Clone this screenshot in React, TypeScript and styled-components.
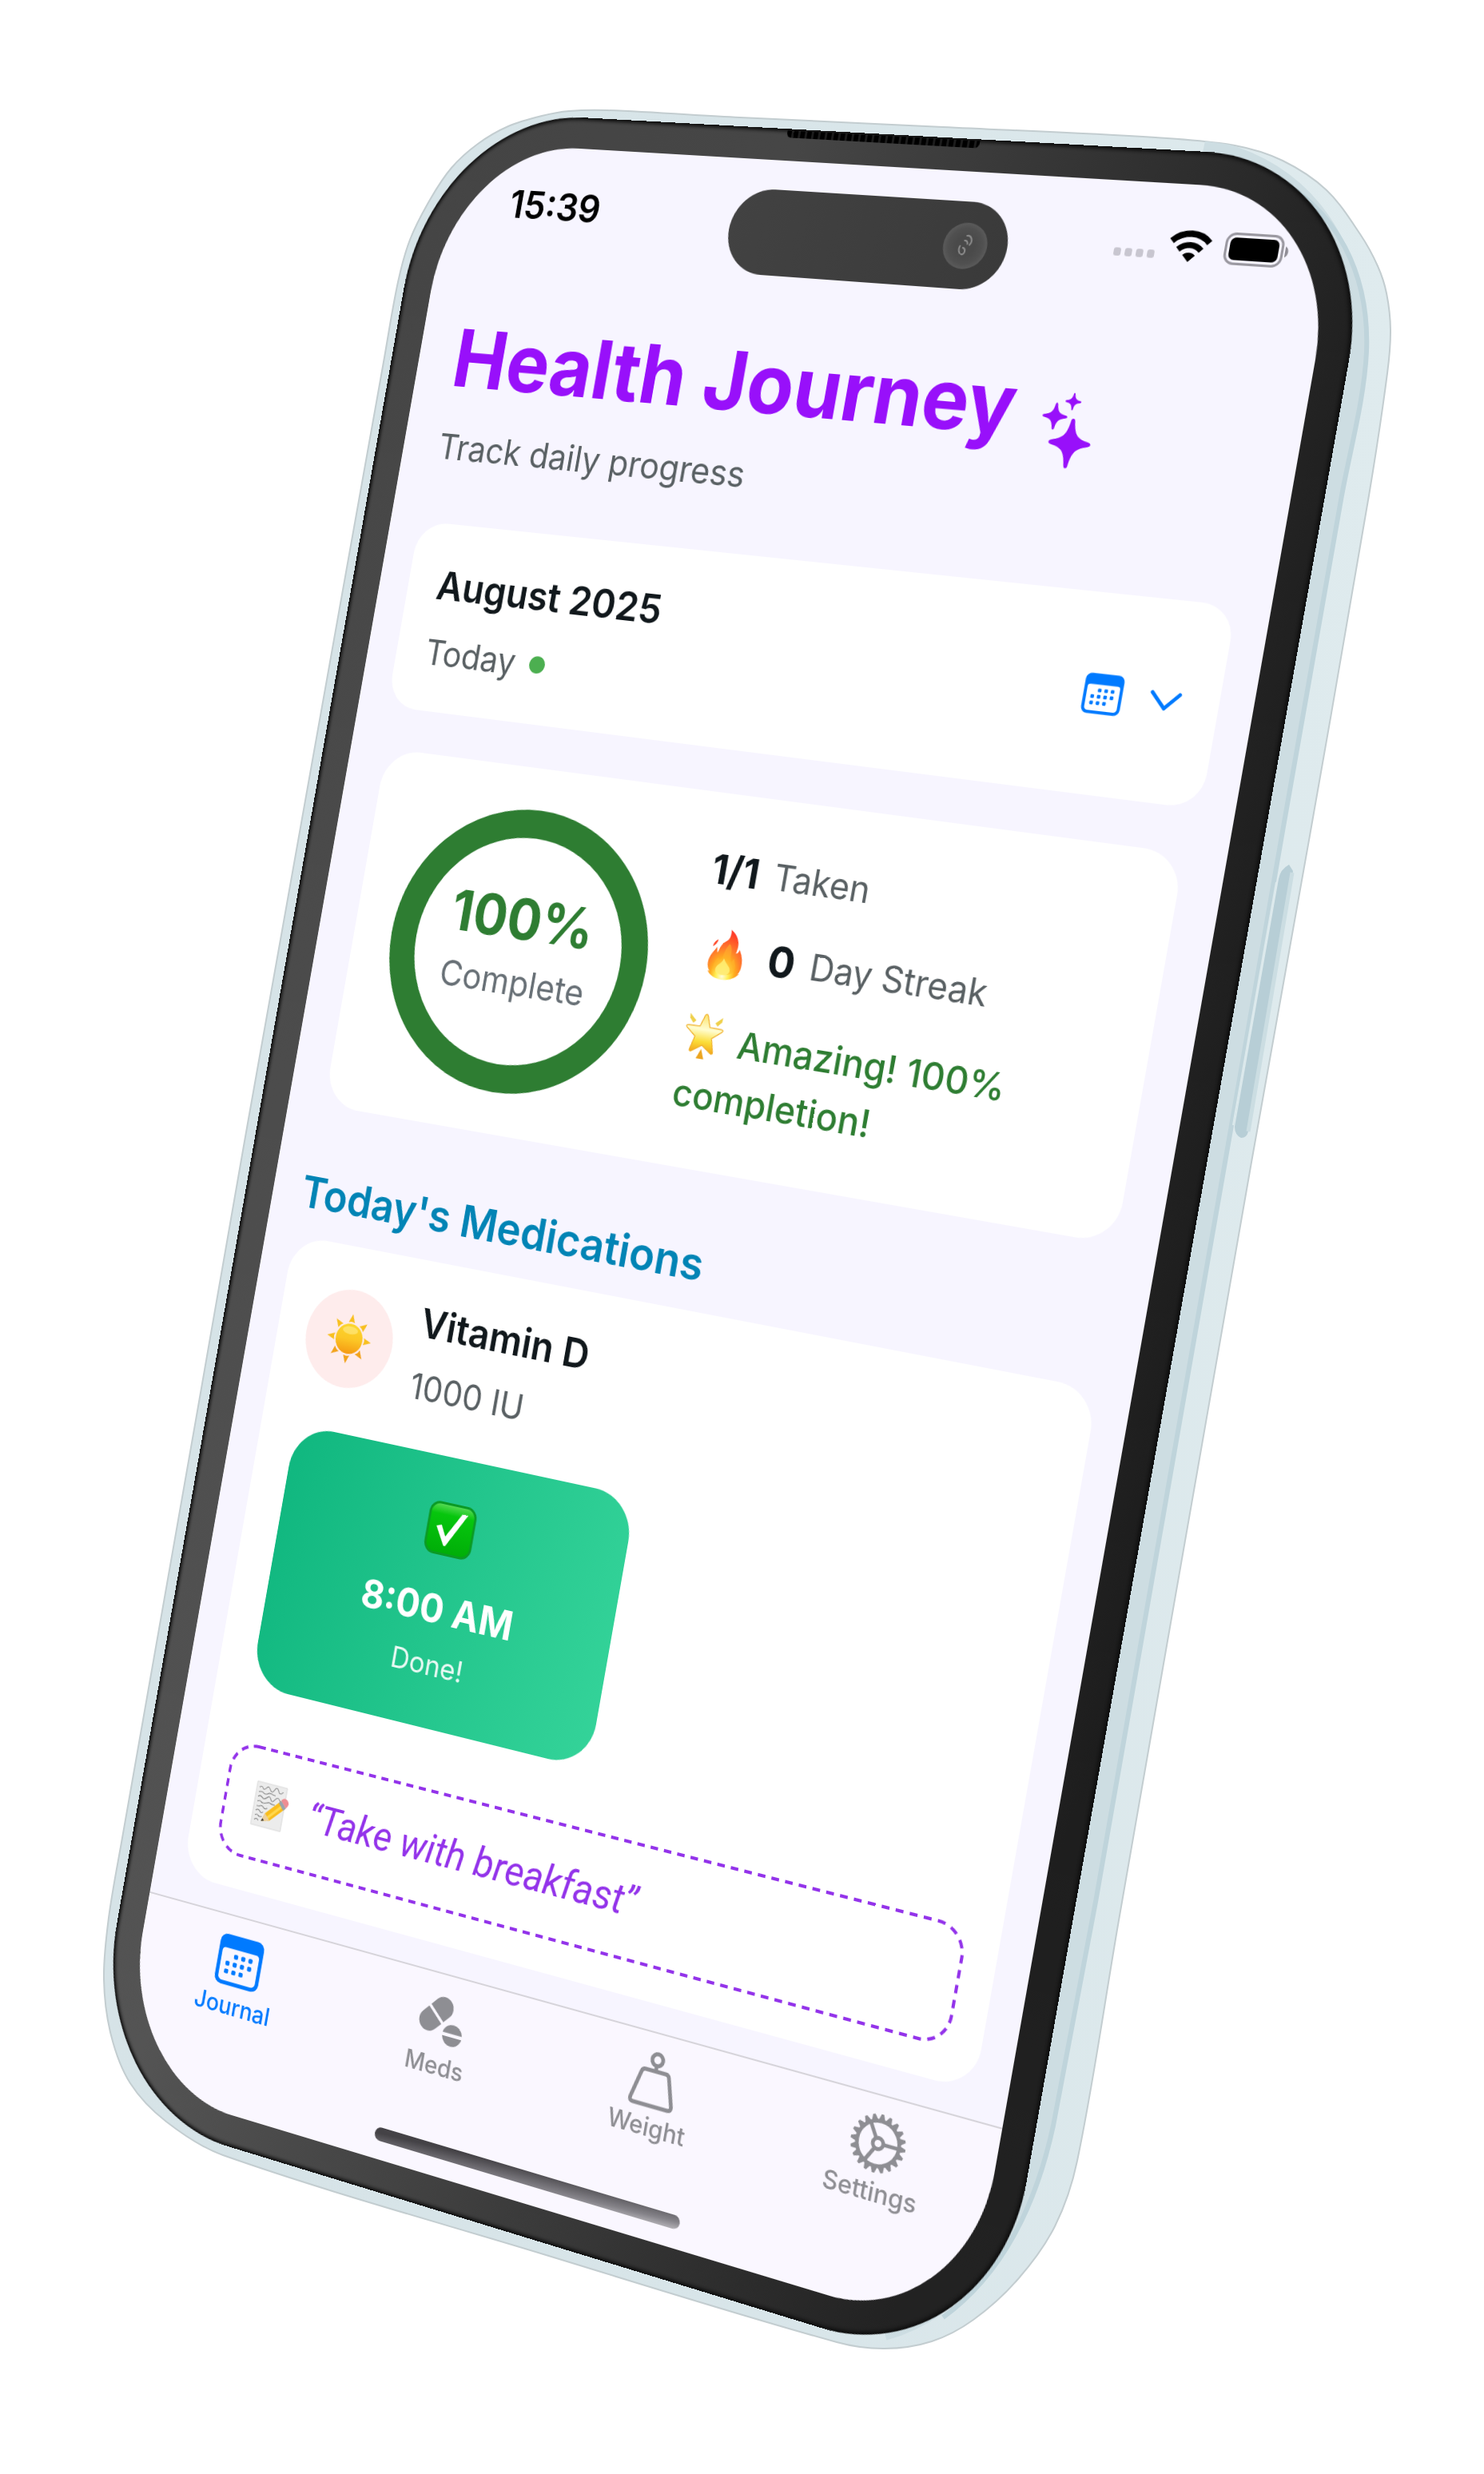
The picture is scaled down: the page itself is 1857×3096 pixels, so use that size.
import React, { useLayoutEffect, useRef, useState } from "react";
import styled, { createGlobalStyle } from "styled-components";

/* ---------- geometry of the tilted device ---------- */

type Point = [number, number];

const ART = { width: 1857, height: 3096 };
const SCREEN = { width: 1179, height: 2556, bezel: 40 };

// Where the four screen corners land on the artwork: TL, TR, BR, BL.
const QUAD: Point[] = [
  [572, 177],
  [1683, 242],
  [1208, 2924],
  [146, 2603],
];

function perspective(quad: Point[], width: number, height: number, scale: number) {
  const [[x0, y0], [x1, y1], [x2, y2], [x3, y3]] = quad;
  const dx1 = x1 - x2;
  const dy1 = y1 - y2;
  const dx2 = x3 - x2;
  const dy2 = y3 - y2;
  const sx = x0 - x1 + x2 - x3;
  const sy = y0 - y1 + y2 - y3;
  const det = dx1 * dy2 - dx2 * dy1;
  const g = (sx * dy2 - dx2 * sy) / det;
  const h = (dx1 * sy - sx * dy1) / det;
  const a = ((x1 - x0 + g * x1) * scale) / width;
  const d = ((y1 - y0 + g * y1) * scale) / width;
  const b = ((x3 - x0 + h * x3) * scale) / height;
  const e = ((y3 - y0 + h * y3) * scale) / height;
  return `matrix3d(${a},${d},0,${g / width},${b},${e},0,${h / height},0,0,1,0,${x0 * scale},${y0 * scale},0,1)`;
}

// Closed smooth curve through a list of points.
function smooth(points: Point[]) {
  const n = points.length;
  const at = (i: number) => points[(i + n) % n];
  let path = `M${at(0)[0]} ${at(0)[1]}`;
  for (let i = 0; i < n; i++) {
    const [p0, p1, p2, p3] = [at(i - 1), at(i), at(i + 1), at(i + 2)];
    const length = (p: Point, q: Point) => Math.hypot(q[0] - p[0], q[1] - p[1]) || 1;
    const d = length(p1, p2);
    const t1 = d / (length(p0, p1) + d);
    const t2 = d / (d + length(p2, p3));
    path +=
      `C${p1[0] + ((p2[0] - p0[0]) * t1) / 3} ${p1[1] + ((p2[1] - p0[1]) * t1) / 3}` +
      ` ${p2[0] - ((p3[0] - p1[0]) * t2) / 3} ${p2[1] - ((p3[1] - p1[1]) * t2) / 3}` +
      ` ${p2[0]} ${p2[1]}`;
  }
  return path + "Z";
}

const BODY: Point[] = [
  [712, 139], [760, 138], [926, 147], [1180, 159], [1446, 172], [1545, 182], [1605, 201],
  [1660, 238], [1702, 293], [1724, 333], [1735, 367], [1740, 413], [1736, 467], [1713, 620],
  [1640, 1040], [1565, 1460], [1400, 2403], [1348, 2704], [1320, 2786], [1274, 2852],
  [1218, 2903], [1166, 2930], [1107, 2939], [1047, 2931], [680, 2821], [279, 2697],
  [208, 2655], [163, 2607], [139, 2547], [130, 2477], [136, 2400], [153, 2300], [248, 1760],
  [311, 1400], [480, 453], [498, 353], [513, 300], [538, 250], [565, 210], [598, 180],
  [636, 158], [678, 145],
];

/* ---------- page ---------- */

const GlobalStyle = createGlobalStyle`
  *, *::before, *::after { box-sizing: border-box; }
  body { margin: 0; background: #fff; }
  h1, h2, h3, p { margin: 0; font-weight: inherit; }
`;

const Stage = styled.div`
  position: relative;
  width: 100%;
  aspect-ratio: ${ART.width} / ${ART.height};
  overflow: hidden;
  font-family: Inter, "Liberation Sans", sans-serif;
`;

const BodyArt = styled.svg`
  display: block;
  width: 100%;
  height: 100%;
`;

const Glass = styled.div`
  position: absolute;
  top: 0;
  left: 0;
  width: ${SCREEN.width + SCREEN.bezel * 2}px;
  height: ${SCREEN.height + SCREEN.bezel * 2}px;
  padding: ${SCREEN.bezel}px;
  border-radius: 216px / 236px;
  background:
    linear-gradient(180deg, rgba(255, 255, 255, 0), rgba(255, 255, 255, 0.08)),
    linear-gradient(100deg, #444 0%, #464646 30%, #2c2c2c 62%, #101010 92%);
  box-shadow: inset 0 0 4px 3px #0c0c0c;
  transform-origin: 0 0;
`;

const Speaker = styled.div`
  position: absolute;
  top: 2px;
  left: 500px;
  width: 256px;
  height: 9px;
  border-radius: 0 0 6px 6px;
  background: repeating-linear-gradient(90deg, #000 0 6px, #1c1c1c 6px 9px);
`;

const Screen = styled.div`
  position: relative;
  display: flex;
  flex-direction: column;
  height: 100%;
  border-radius: 176px / 198px;
  overflow: hidden;
  background: #f7f5ff;
  color: #11181c;
`;

const StatusBar = styled.header`
  display: flex;
  align-items: center;
  justify-content: space-between;
  height: 153px;
  padding: 0 54px 0 92px;
`;

const Clock = styled.time`
  font-size: 49px;
  line-height: 60px;
  font-weight: 600;
  color: #000;
`;

const StatusIcons = styled.div`
  display: flex;
  align-items: center;
  gap: 16px;
  padding-bottom: 6px;
`;

const SignalDots = styled.div`
  display: flex;
  gap: 5px;
  padding-top: 24px;
  & > i {
    width: 9px;
    height: 10px;
    border-radius: 3px;
    background: #c8c6d0;
  }
`;

const Island = styled.div`
  position: absolute;
  top: 37px;
  left: 404px;
  display: flex;
  align-items: center;
  justify-content: flex-end;
  width: 371px;
  height: 108px;
  padding-right: 26px;
  border-radius: 54px;
  background: linear-gradient(100deg, #424242, #3a3a3a);
`;

const Camera = styled.div`
  display: flex;
  align-items: center;
  justify-content: center;
  width: 57px;
  height: 57px;
  border-radius: 50%;
  background: radial-gradient(circle, #4a4a4a 30%, #505050 55%, #5a5a5a 70%);
`;

const Main = styled.main`
  flex: 1;
  padding: 67px 42px 0;
`;

const Heading = styled.div`
  padding: 0 9px;
  margin-bottom: 72px;
`;

const TitleRow = styled.div`
  display: flex;
  align-items: flex-end;
  gap: 34px;
  height: 120px;
  margin-bottom: 29px;
  color: #9810fa;
  & > svg {
    margin-bottom: -12px;
  }
`;

const Title = styled.h1`
  font-size: 103px;
  line-height: 120px;
  font-weight: 700;
`;

const Muted = styled.p`
  font-size: 45px;
  line-height: 54px;
  font-weight: 400;
  color: #596063;
`;

const Strong = styled.h3`
  font-size: 51px;
  line-height: 60px;
  font-weight: 600;
`;

const Card = styled.section`
  border-radius: 50px;
  background: #fff;
`;

const DateCard = styled(Card)`
  display: flex;
  align-items: center;
  justify-content: space-between;
  height: 243px;
  padding: 0 46px 0 42px;
  margin-bottom: 54px;
  border-radius: 42px;
`;

const Stack = styled.div<{ $gap: number }>`
  display: flex;
  flex-direction: column;
  gap: ${(p) => p.$gap}px;
`;

const TodayRow = styled.div`
  display: flex;
  align-items: center;
  gap: 20px;
`;

const Dot = styled.span`
  width: 22px;
  height: 22px;
  border-radius: 50%;
  background: #4caf50;
`;

const PickerButton = styled.button`
  display: flex;
  align-items: center;
  gap: 32px;
  padding: 0;
  border: 0;
  background: none;
  color: #007aff;
`;

const SummaryCard = styled(Card)`
  display: flex;
  align-items: center;
  gap: 65px;
  height: 468px;
  padding: 0 50px 0 54px;
  margin: 0 10px 79px;
`;

const Ring = styled.div`
  display: flex;
  flex-direction: column;
  align-items: center;
  justify-content: center;
  gap: 13px;
  width: 362px;
  height: 362px;
  padding-bottom: 18px;
  border: 36px solid #2e7d32;
  border-radius: 50%;
`;

const Percent = styled.strong`
  font-size: 72px;
  line-height: 84px;
  font-weight: 700;
  color: #2e7d32;
`;

const RingLabel = styled(Muted)`
  color: #687076;
`;

const Stats = styled.div`
  width: 480px;
  padding-top: 8px;
`;

const StatRow = styled.div`
  display: flex;
  align-items: center;
  gap: 20px;
  margin-bottom: 40px;
`;

const Count = styled.strong<{ $large?: boolean }>`
  font-size: ${(p) => (p.$large ? 54 : 51)}px;
  line-height: ${(p) => (p.$large ? 66 : 60)}px;
  font-weight: 700;
`;

const FlameSlot = styled.span`
  display: flex;
  justify-content: center;
  width: 75px;
`;

const Praise = styled.p`
  font-size: 47px;
  line-height: 70px;
  font-weight: 500;
  color: #2e7d32;
  & > svg {
    margin-right: 20px;
    vertical-align: -9px;
  }
`;

const SectionTitle = styled.h2`
  margin-bottom: 24px;
  font-size: 57px;
  line-height: 69px;
  font-weight: 600;
  color: #0284b5;
`;

const MedCard = styled(Card)`
  padding: 49px 42px 42px;
`;

const MedHeader = styled.div`
  display: flex;
  align-items: center;
  gap: 35px;
  margin-bottom: 52px;
`;

const MedBadge = styled.span`
  display: flex;
  align-items: center;
  justify-content: center;
  width: 126px;
  height: 126px;
  border-radius: 50%;
  background: #feecec;
`;

const DoseButton = styled.button`
  display: flex;
  flex-direction: column;
  align-items: center;
  justify-content: center;
  width: 486px;
  height: 342px;
  margin: 0 0 74px 9px;
  padding: 0;
  border: 0;
  border-radius: 56px;
  background: linear-gradient(100deg, #10b77f, #34d399);
  color: #fff;
  font-family: inherit;
`;

const DoseTime = styled.span`
  margin: 38px 0 18px;
  font-size: 51px;
  line-height: 60px;
  font-weight: 700;
`;

const DoseState = styled.span`
  font-size: 37px;
  line-height: 45px;
  opacity: 0.9;
`;

const Note = styled.div`
  position: relative;
  display: flex;
  align-items: center;
  gap: 30px;
  height: 144px;
  padding: 0 40px;
`;

const DashedOutline = styled.svg`
  position: absolute;
  inset: 0;
  width: 100%;
  height: 100%;
  overflow: visible;
`;

const NoteText = styled.p`
  font-family: Roboto, Inter, sans-serif;
  font-size: 51px;
  line-height: 57px;
  font-style: italic;
  color: #9333ea;
`;

const TabBar = styled.nav`
  display: grid;
  grid-template-columns: repeat(4, 1fr);
  height: 250px;
  padding-top: 20px;
  border-top: 2px solid #d6d4da;
  background: #faf7ff;
`;

const Tab = styled.a<{ $active?: boolean }>`
  display: flex;
  flex-direction: column;
  align-items: center;
  gap: 4px;
  height: 116px;
  font-size: 31px;
  line-height: 36px;
  font-weight: 500;
  text-decoration: none;
  color: ${(p) => (p.$active ? "#007aff" : "#8e8e93")};
`;

const TabIcon = styled.span`
  display: flex;
  align-items: center;
  justify-content: center;
  height: 72px;
`;

const HomeIndicator = styled.div`
  position: absolute;
  bottom: 23px;
  left: 378px;
  width: 424px;
  height: 17px;
  border-radius: 9px;
  background: linear-gradient(177deg, #444246 20%, #858389 75%, #b5b3b8);
`;

/* ---------- icons ---------- */

const CalendarIcon = ({ size }: { size: number }) => (
  <svg width={size} height={size} viewBox="0 0 24 24" fill="currentColor" aria-hidden="true">
    <path
      fillRule="evenodd"
      d="M4.2.6h15.6A3.6 3.6 0 0 1 23.400 4.200v15.600a3.600 3.600 0 0 1-3.600 3.600H4.200A3.600 3.600 0 0 1 .6 19.800V4.200A3.600 3.600 0 0 1 4.200.6ZM4 6.800a1.600 1.600 0 0 0-1.600 1.600v11.200A2 2 0 0 0 4.400 21.600h15.200a2 2 0 0 0 2-2V8.400A1.600 1.600 0 0 0 20 6.800Z"
    />
    {[
      [9.8, 10], [13.6, 10], [17.4, 10],
      [6, 13.6], [9.8, 13.6], [13.6, 13.6], [17.4, 13.6],
      [6, 17.2], [9.8, 17.2], [13.6, 17.2],
    ].map(([x, y]) => (
      <rect key={`${x}-${y}`} x={x - 1} y={y - 1} width="2.1" height="2.1" rx=".6" />
    ))}
  </svg>
);

const ChevronIcon = () => (
  <svg width="40" height="25" viewBox="0 0 40 25" fill="none" stroke="currentColor" strokeWidth="4.500" strokeLinecap="round" strokeLinejoin="round" aria-hidden="true">
    <path d="M3 3 20 21 37 3" />
  </svg>
);

const SparklesIcon = () => (
  <svg width="70" height="92" viewBox="-2 0 68 92" fill="currentColor" aria-hidden="true">
    <path d="M38 31c1.500 0 2.200 1 2.500 2.500C43 51 47 55 61.500 58.200c2 .4 3 1.200 3 2.800s-1 2.300-3 2.700C47 67 43 71 40.500 88.500 40.200 90.500 39.500 91.500 38 91.500s-2.200-1-2.500-3C33 71 29 67 14.500 63.700c-2-.4-3-1.100-3-2.700s1-2.400 3-2.800C29 55 33 51 35.500 33.500 35.800 32 36.500 31 38 31Z" />
    <path d="M14 13.500c.9 0 1.300.6 1.500 1.700C16.900 24.200 19 26.500 28 28.200c1.100.2 1.700.6 1.700 1.600s-.6 1.500-1.700 1.700c-9 1.700-11.100 4-12.500 13-.2 1.100-.6 1.700-1.500 1.700s-1.300-.6-1.500-1.700C11.100 35.500 9 33.200 0 31.500c-1.100-.2-1.700-.7-1.700-1.700S-1.100 28.400 0 28.200c9-1.700 11.100-4 12.500-13 .2-1.100.6-1.700 1.500-1.700Z" />
    <path d="M34 0c.6 0 .9.4 1 1.200.9 5.500 2.300 7.200 7.800 8 .8.200 1.200.6 1.200 1.300s-.4 1-1.200 1.200c-5.500.9-6.900 2.500-7.800 8-.1.8-.4 1.300-1 1.300s-.9-.5-1-1.300c-.9-5.500-2.300-7.100-7.800-8-.8-.2-1.200-.5-1.200-1.200s.4-1.100 1.200-1.300c5.500-.8 6.900-2.500 7.800-8 .1-.8.400-1.200 1-1.200Z" />
  </svg>
);

const WifiIcon = () => (
  <svg width="53" height="39" viewBox="0 0 17 12.500" fill="none" stroke="#000" aria-hidden="true">
    <path d="M1 4.700a10.600 10.600 0 0 1 15 0" strokeWidth="2.500" />
    <path d="M3.900 7.900a6.500 6.500 0 0 1 9.200 0" strokeWidth="2.300" />
    <path d="M8.500 12.500 6 9.900a3.600 3.600 0 0 1 5 0Z" fill="#000" stroke="none" />
  </svg>
);

const BatteryIcon = () => (
  <svg width="79" height="39" viewBox="0 0 79 39" aria-hidden="true">
    <rect x="1.500" y="1.500" width="69" height="36" rx="11" fill="none" stroke="#9a98a0" strokeWidth="3" />
    <rect x="6" y="6" width="60" height="27" rx="7" fill="#000" />
    <path d="M74 13c5 2 5 11 0 13Z" fill="#8f8d95" />
  </svg>
);

const LensGlint = () => (
  <svg width="22" height="28" viewBox="0 0 22 28" fill="none" stroke="#8d8d8d" strokeWidth="2" strokeLinecap="round" aria-hidden="true">
    <path d="M11 2q4-1 6 3t-1 8M9 8q4 0 4 4M4 15q-2 5 1 9M8 17q4 1 3 5t-4 3" />
  </svg>
);

const FlameEmoji = () => (
  <svg width="48" height="63" viewBox="0 0 40 54" role="img" aria-label="fire">
    <defs>
      <radialGradient id="flame" cx=".48" cy=".92" r=".85">
        <stop offset="0" stopColor="#fffde0" />
        <stop offset=".22" stopColor="#ffef52" />
        <stop offset=".42" stopColor="#ffad1f" />
        <stop offset=".65" stopColor="#ff7a2b" />
        <stop offset="1" stopColor="#ff3b28" />
      </radialGradient>
    </defs>
    <path d="M22 0c8 5 11 11 10.500 18-.2 3-1 5-1 6.500 1.500-.3 3-2 3.500-4.500 4 6 5.500 12 5 18-.2 3-1 5.500-3 8l2-1c-2 3-4 4.500-7 6-4 2.500-8 3-12 3-8 0-15-3-17.500-8l2.500 1C0 42 .5 34 4 28c1.500-3 3.500-5 5-8 .7 3.500.5 5 1.500 6C12 22 13 16 18 13c4-2 5-7 4-13Z" fill="url(#flame)" />
    <path d="M4 20c0-4 2-6 5-8-.5 4-2 6-5 8Z" fill="#ff4a2b" />
    <path d="M23 15c-6 7-4 13-8 20l-3-4c-3 4-5 8-3.500 12 3 7 20 8 24 0 2-5-1-9-2-13l-3 4c-3-7 1-12-4.500-19Z" fill="#ffb52e" opacity=".55" />
    <path d="M19 31c-2 7-9 8-8 14 1 5 13 6 16 1 3-6-5-8-8-15Z" fill="#fff37a" opacity=".8" />
  </svg>
);

const StarEmoji = () => (
  <svg width="55" height="59" viewBox="0 0 53 57" role="img" aria-label="glowing star">
    <defs>
      <linearGradient id="star" x1="0" y1="0" x2="0" y2="1">
        <stop offset="0" stopColor="#fce36b" />
        <stop offset=".4" stopColor="#fffdd0" />
        <stop offset=".72" stopColor="#fbdd38" />
        <stop offset="1" stopColor="#f3a51c" />
      </linearGradient>
    </defs>
    <path d="M26.500 2c1 0 1.600.7 2 1.800L33 17l15.500.6c2 0 2.500 1.800 1 3L37.500 30l4.300 16c.5 2-1 3-2.700 2L26.500 39.500 14 48c-1.700 1-3.200 0-2.700-2l4.300-16L3.500 20.600c-1.500-1.200-1-3 1-3L20 17l4.500-13.200c.4-1.100 1-1.800 2-1.800Z" fill="url(#star)" stroke="#f0b02c" strokeWidth="1.200" />
    <path d="M5 3.500 14 11 10.500 14.500 5.500 9Z" fill="#efd04a" />
    <path d="M48 3.500 39 11 42.500 14.500 47.500 9Z" fill="#efd04a" />
    <path d="M26.500 44 31.500 56h-10Z" fill="#eca520" />
  </svg>
);

const SunEmoji = () => (
  <svg width="64" height="64" viewBox="0 0 64 64" role="img" aria-label="sun">
    <defs>
      <linearGradient id="sun" x1="0" y1="0" x2="0" y2="1">
        <stop offset="0" stopColor="#fbd62c" />
        <stop offset=".5" stopColor="#fcc726" />
        <stop offset="1" stopColor="#f59a12" />
      </linearGradient>
    </defs>
    <circle cx="32" cy="32" r="19.500" fill="url(#sun)" />
    <ellipse cx="32" cy="21" rx="11" ry="5" fill="#fff2a0" opacity=".5" />
    {[0, 45, 90, 135, 180, 225, 270, 315].map((angle) => (
      <path key={angle} d="M32 0 36.500 11q-4.500-2-9 0Z" fill={angle > 90 && angle < 270 ? "#f2a31d" : "#f8c01f"} transform={`rotate(${angle} 32 32)`} />
    ))}
  </svg>
);

const CheckEmoji = () => (
  <svg width="68" height="67" viewBox="0 0 66 66" role="img" aria-label="done">
    <defs>
      <linearGradient id="check" x1="0" y1="0" x2="0" y2="1">
        <stop offset="0" stopColor="#5ddb5a" />
        <stop offset=".22" stopColor="#06c60d" />
        <stop offset="1" stopColor="#00ad08" />
      </linearGradient>
    </defs>
    <rect x="1.500" y="1.500" width="63" height="63" rx="13" fill="url(#check)" stroke="#0b9a25" strokeWidth="3" />
    <path d="M13 31 20 28.500 27.500 42 46 10.500h8L29.500 54h-2.500Z" fill="#fff" />
  </svg>
);

const MemoEmoji = () => (
  <svg width="54" height="60" viewBox="0 0 54 60" role="img" aria-label="memo">
    <path d="M4 2h44v56H4Z" fill="#ececec" stroke="#d9d9d9" />
    <g stroke="#8b8b8b" strokeWidth="1.200" fill="none">
      <path d="M8 9q3-3 5 0t5-1 6 1 6-1 6 0 7 0" />
      <path d="M8 15q4-2 7 0t6 0 6-1 6 1" />
      <path d="M8 21q3-3 6 0t7-1 6 1 6-1 8 1" />
      <path d="M8 27q4-2 6 0t7 0 6-1 7 1" />
      <path d="M8 33h4q3-3 6 0t6 0" />
      <path d="M8 39q3-3 6 0t5 0" />
      <path d="M8 45q3-2 5 0t5 0" />
      <path d="M8 51q3-3 6 0" />
    </g>
    <path d="M18 51 22 40 42 19.500 50 28 30 48Z" fill="#f9bd1e" />
    <path d="M25 44 45 23l2.500 2.500L27.500 46Z" fill="#ffd84d" />
    <path d="M18 51 22 40l8 8Z" fill="#ecd0a0" />
    <path d="M18 51l1.400-4 3 2.600Z" fill="#333" />
    <path d="M39 22.500l3.500-3.500 8 8.500-3.500 3.500Z" fill="#9aa3ad" />
    <path d="M42 19q4-6 9-2t-.5 10.500Z" fill="#ee8d93" />
  </svg>
);

const PillsIcon = () => (
  <svg width="66" height="63" viewBox="0 0 60 57" fill="currentColor" aria-hidden="true">
    <g transform="rotate(-48 22 23)">
      <path d="M20.500 10.500v25H10.500a12.500 12.500 0 0 1 0-25Z" />
      <path d="M23.800 10.500v25h10a12.500 12.500 0 0 0 0-25Z" />
    </g>
    <path d="M33.700 40.500a12.500 12.500 0 0 1 24.600 0Z" />
    <path d="M33.700 44.500a12.500 12.500 0 0 0 24.600 0Z" />
  </svg>
);

const WeightIcon = () => (
  <svg width="64" height="70" viewBox="0 0 60 68" fill="none" stroke="currentColor" strokeWidth="4.800" strokeLinejoin="round" aria-hidden="true">
    <circle cx="30" cy="10" r="7" />
    <path d="M30 17v6" />
    <path d="M17 23.500h26q4 0 5 4l8.500 31.500q1.500 6-4 6h-45q-5.500 0-4-6L12 27.500q1-4 5-4Z" />
  </svg>
);

const GearIcon = () => (
  <svg width="72" height="72" viewBox="-35 -35 70 70" fill="none" stroke="currentColor" strokeWidth="4.500" aria-hidden="true">
    <circle r="26" />
    <circle r="6.500" />
    {[0, 120, 240].map((angle) => (
      <path key={angle} d="M6.500 0H25" transform={`rotate(${angle})`} />
    ))}
    {Array.from({ length: 20 }, (_, i) => (
      <path key={i} d="M27-4 34-1.500v3L27 4Z" fill="currentColor" stroke="none" transform={`rotate(${i * 18})`} />
    ))}
  </svg>
);

/* ---------- app ---------- */

const TABS = [
  { label: "Journal", icon: <CalendarIcon size={68} />, active: true },
  { label: "Meds", icon: <PillsIcon /> },
  { label: "Weight", icon: <WeightIcon /> },
  { label: "Settings", icon: <GearIcon /> },
];

const DeviceBody = () => (
  <BodyArt viewBox={`0 0 ${ART.width} ${ART.height}`} aria-hidden="true">
    <defs>
      <linearGradient id="frame" x1="0" y1="0" x2="1" y2="0">
        <stop offset="0" stopColor="#d6e3e7" />
        <stop offset=".5" stopColor="#d8e5e9" />
        <stop offset="1" stopColor="#dfebee" />
      </linearGradient>
      <clipPath id="bodyClip">
        <path d={smooth(BODY)} />
      </clipPath>
    </defs>
    <path d={smooth(BODY)} fill="url(#frame)" stroke="#c3cdd0" strokeWidth="2" />
    <g clipPath="url(#bodyClip)" fill="none">
      <path d="M1520 186C1640 210 1712 300 1709 440C1707 500 1690 560 1679 620L1605 1040L1532 1460L1371 2380L1318 2660C1290 2790 1215 2890 1120 2916" stroke="#cddde2" strokeWidth="26" transform="translate(-14 0)" />
      <path d="M1600 226C1670 262 1714 340 1710 440C1707 500 1690 560 1679 620L1605 1040L1532 1460L1371 2380L1318 2660C1290 2790 1235 2860 1180 2900" stroke="#bfd4db" strokeWidth="6" />
    </g>
    <path d="M1600 1100Q1602 1088 1613 1082L1618 1090L1562 1416Q1560 1424 1553 1424Q1545 1420 1545 1410Z" fill="#b7ced6" />
    <path d="M1617 1092 1562 1416" stroke="#cbdde2" strokeWidth="5" />
    <path d="M1597 1104 1543 1408" stroke="#dce9ec" strokeWidth="2" />
  </BodyArt>
);

export default function App() {
  const stage = useRef<HTMLDivElement>(null);
  const [scale, setScale] = useState(1);

  useLayoutEffect(() => {
    const measure = () => {
      if (stage.current) setScale(stage.current.clientWidth / ART.width);
    };
    measure();
    window.addEventListener("resize", measure);
    return () => window.removeEventListener("resize", measure);
  }, []);

  const transform = `${perspective(QUAD, SCREEN.width, SCREEN.height, scale)} translate(${-SCREEN.bezel}px, ${-SCREEN.bezel}px)`;

  return (
    <>
      <GlobalStyle />
      <Stage ref={stage}>
        <DeviceBody />
        <Glass style={{ transform }}>
          <Speaker />
          <Screen>
            <StatusBar>
              <Clock>15:39</Clock>
              <StatusIcons>
                <SignalDots>
                  <i />
                  <i />
                  <i />
                  <i />
                </SignalDots>
                <WifiIcon />
                <BatteryIcon />
              </StatusIcons>
            </StatusBar>
            <Island>
              <Camera>
                <LensGlint />
              </Camera>
            </Island>

            <Main>
              <Heading>
                <TitleRow>
                  <Title>Health Journey</Title>
                  <SparklesIcon />
                </TitleRow>
                <Muted>Track daily progress</Muted>
              </Heading>

              <DateCard>
                <Stack $gap={30}>
                  <Strong>August 2025</Strong>
                  <TodayRow>
                    <Muted>Today</Muted>
                    <Dot />
                  </TodayRow>
                </Stack>
                <PickerButton aria-label="Choose date">
                  <CalendarIcon size={51} />
                  <ChevronIcon />
                </PickerButton>
              </DateCard>

              <SummaryCard>
                <Ring>
                  <Percent>100%</Percent>
                  <RingLabel>Complete</RingLabel>
                </Ring>
                <Stats>
                  <StatRow>
                    <Count>1/1</Count>
                    <Muted>Taken</Muted>
                  </StatRow>
                  <StatRow>
                    <FlameSlot>
                      <FlameEmoji />
                    </FlameSlot>
                    <Count $large>0</Count>
                    <Muted>Day Streak</Muted>
                  </StatRow>
                  <Praise>
                    <StarEmoji />
                    Amazing! 100% completion!
                  </Praise>
                </Stats>
              </SummaryCard>

              <SectionTitle>Today's Medications</SectionTitle>

              <MedCard>
                <MedHeader>
                  <MedBadge>
                    <SunEmoji />
                  </MedBadge>
                  <Stack $gap={24}>
                    <Strong>Vitamin D</Strong>
                    <Muted>1000 IU</Muted>
                  </Stack>
                </MedHeader>
                <DoseButton>
                  <CheckEmoji />
                  <DoseTime>8:00 AM</DoseTime>
                  <DoseState>Done!</DoseState>
                </DoseButton>
                <Note>
                  <DashedOutline aria-hidden="true">
                    <rect x="1" y="1" width="99.800%" height="142" rx="36" fill="none" stroke="#9333ea" strokeWidth="4" strokeDasharray="10 8" />
                  </DashedOutline>
                  <MemoEmoji />
                  <NoteText>“Take with breakfast”</NoteText>
                </Note>
              </MedCard>
            </Main>

            <TabBar>
              {TABS.map((tab) => (
                <Tab key={tab.label} href={`#${tab.label.toLowerCase()}`} $active={tab.active}>
                  <TabIcon>{tab.icon}</TabIcon>
                  {tab.label}
                </Tab>
              ))}
            </TabBar>
            <HomeIndicator />
          </Screen>
        </Glass>
      </Stage>
    </>
  );
}
